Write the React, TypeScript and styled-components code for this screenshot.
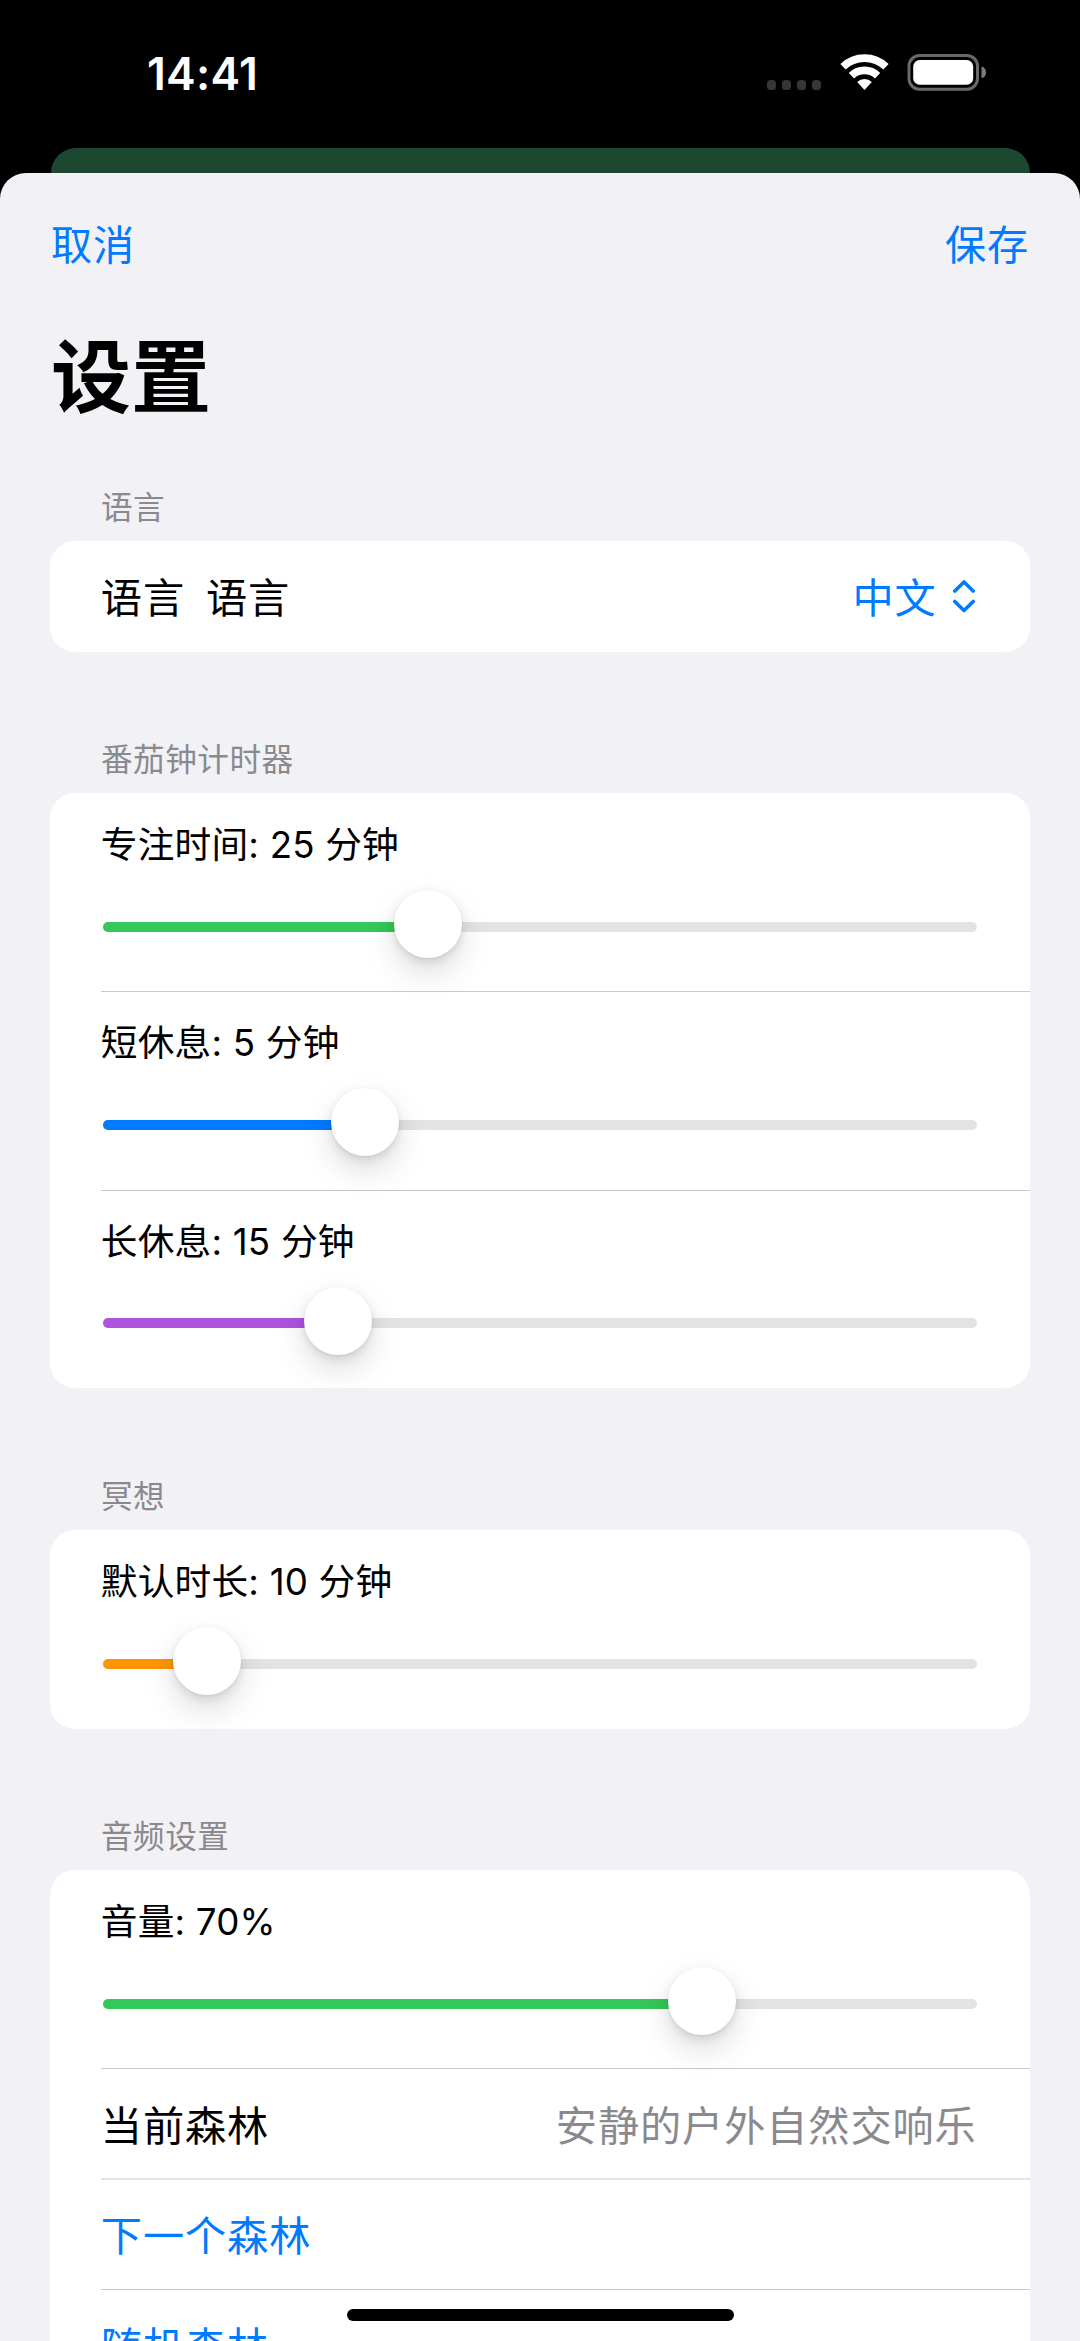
import React from "react";
import styled, { createGlobalStyle, css } from "styled-components";

const GlobalStyle = createGlobalStyle`
  * { box-sizing: border-box; }
  html, body { margin: 0; padding: 0; background: #000; }
  body {
    width: 1080px;
    height: 2341px;
    overflow: hidden;
    font-family: Inter, "Noto Sans CJK SC", sans-serif;
    color: #000;
  }
`;

const Screen = styled.div`
  position: relative;
  display: flex;
  flex-direction: column;
  width: 1080px;
  height: 2341px;
  overflow: hidden;
  background: #000;
`;

const StatusBar = styled.header`
  flex: none;
  display: flex;
  justify-content: space-between;
  height: 148px;
  padding: 54px 94px 0 147px;
`;

const Clock = styled.time`
  font-size: 44.5px;
  line-height: 40px;
  font-weight: 600;
  letter-spacing: 0.3px;
  color: #fff;
`;

const StatusIcons = styled.div`
  display: flex;
  gap: 18px;
  height: 37px;
`;

const SignalDots = styled.div`
  display: flex;
  align-items: flex-end;
  gap: 5.8px;
  padding: 0 1px 1px 0;
`;

const Dot = styled.i`
  width: 9.2px;
  height: 9.6px;
  border-radius: 3.5px;
  background: #363636;
`;

const BackCard = styled.div`
  flex: none;
  height: 25px;
  margin: 0 50.5px;
  border-radius: 25px 25px 0 0;
  background: #1c4831;
`;

const Sheet = styled.main`
  flex: 1;
  min-height: 0;
  overflow: hidden;
  border-radius: 26px 26px 0 0;
  background: #f2f1f6;
`;

const NavBar = styled.nav`
  display: flex;
  justify-content: space-between;
  height: 102px;
  padding: 42px 51px 0 51px;
`;

const NavButton = styled.button`
  padding: 0;
  border: 0;
  background: none;
  font: inherit;
  font-size: 41.2px;
  line-height: 60px;
  letter-spacing: 0.8px;
  color: #007aff;
`;

const Title = styled.h1`
  margin: 42px 0 0 51px;
  font-size: 80px;
  line-height: 120px;
  font-weight: 700;
`;

const SectionHeader = styled.h2<{ $height: number }>`
  display: flex;
  align-items: flex-end;
  height: ${(p) => p.$height}px;
  margin: 0;
  padding: 0 0 10px 101px;
  font-size: 31.6px;
  line-height: 46px;
  letter-spacing: 0.5px;
  font-weight: 400;
  color: #8a8a8e;
`;

const Card = styled.section`
  margin: 0 50.3px;
  border-radius: 25px;
  background: #fff;
`;

type Divider = "line" | "soft";

/* Hairline along the top edge; the soft one straddles two device pixels. */
const divider = css<{ $divider?: Divider }>`
  box-shadow: ${(p) =>
    p.$divider === "line"
      ? "inset 0 1px 0 #c8c8ca"
      : p.$divider === "soft"
        ? "inset 0 1px 0 #e4e4e6, 0 -1px 0 #e4e4e6"
        : "none"};
`;

const Row = styled.div<{ $divider?: Divider }>`
  display: flex;
  align-items: center;
  justify-content: space-between;
  height: 110.5px;
  margin-left: 50.5px;
  padding: 0 53px 2px 0;
  font-size: 41.2px;
  letter-spacing: 0.9px;
  ${divider}
`;

const RowLabel = styled.span<{ $link?: boolean }>`
  color: ${(p) => (p.$link ? "#007aff" : "#000")};
  white-space: pre;
  word-spacing: -2px;
`;

const RowValue = styled.span`
  color: #8a8a8e;
`;

const Picker = styled.span`
  display: flex;
  align-items: center;
  gap: 15px;
  padding-right: 1px;
  color: #007aff;
`;

const SliderRow = styled.div<{ $divider?: Divider }>`
  height: 198.4px;
  margin-left: 50.5px;
  padding: 27px 53px 0 0;
  ${divider}
`;

const SliderLabel = styled.div`
  font-size: 36.7px;
  line-height: 50px;
  letter-spacing: 0.2px;
`;

const Track = styled.div`
  position: relative;
  height: 10px;
  margin: 51.6px 0 0 2px;
  border-radius: 5px;
  background: #e3e3e4;
`;

const Fill = styled.div<{ $color: string }>`
  height: 100%;
  border-radius: 5px;
  background: ${(p) => p.$color};
`;

const Thumb = styled.div`
  position: absolute;
  top: -31.8px;
  width: 68px;
  height: 68px;
  margin-left: -34px;
  border-radius: 50%;
  background: #fff;
  box-shadow: 0 1px 3px rgba(0, 0, 0, 0.06), 0 14px 32px rgba(0, 0, 0, 0.14), 0 4px 10px rgba(0, 0, 0, 0.09);
`;

const HomeIndicator = styled.div`
  position: absolute;
  left: 346.5px;
  bottom: 20px;
  width: 387px;
  height: 12.5px;
  border-radius: 7px;
  background: #000;
`;

const WifiIcon = () => (
  <svg width="49" height="37" viewBox="0 0 49 37">
    <g fill="none" stroke="#fff" strokeWidth="7.6">
      <path d="M3 12.8a31 31 0 0 1 43 0" />
      <path d="M11.4 21.7a18.9 18.9 0 0 1 26.2 0" />
    </g>
    <path d="M24.5 36l-7.3-8.1a10.4 10.4 0 0 1 14.6 0z" fill="#fff" />
  </svg>
);

const BatteryIcon = () => (
  <svg width="79" height="37" viewBox="0 0 79 37">
    <rect x="2" y="1.5" width="68.5" height="33.7" rx="10.5" fill="none" stroke="#696969" strokeWidth="3" />
    <rect x="6.2" y="6" width="60" height="24.7" rx="6.5" fill="#fff" />
    <path d="M74.5 12.5c3 .8 4.5 3 4.5 5.900s-1.500 5.100-4.500 5.900z" fill="#7b7b7b" />
  </svg>
);

const ChevronPair = styled.svg`
  margin-top: 2px;
`;

const UpDownIcon = () => (
  <ChevronPair width="24" height="34" viewBox="0 0 24 34" fill="none" stroke="currentColor" strokeWidth="3.6" strokeLinecap="round" strokeLinejoin="round">
    <path d="M2.8 12L12 3l9.2 9M2.8 22.5l9.2 9 9.200-9" />
  </ChevronPair>
);

type SliderProps = { label: string; value: number; color: string; divider?: Divider };

const Slider = ({ label, value, color, divider: kind }: SliderProps) => (
  <SliderRow $divider={kind}>
    <SliderLabel>{label}</SliderLabel>
    <Track>
      <Fill $color={color} style={{ width: `${value}%` }} />
      <Thumb style={{ left: `${value}%` }} />
    </Track>
  </SliderRow>
);

export default function App() {
  return (
    <Screen>
      <GlobalStyle />
      <StatusBar>
        <Clock>14:41</Clock>
        <StatusIcons>
          <SignalDots>
            <Dot />
            <Dot />
            <Dot />
            <Dot />
          </SignalDots>
          <WifiIcon />
          <BatteryIcon />
        </StatusIcons>
      </StatusBar>
      <BackCard />
      <Sheet>
        <NavBar>
          <NavButton>取消</NavButton>
          <NavButton>保存</NavButton>
        </NavBar>
        <Title>设置</Title>

        <SectionHeader $height={104}>语言</SectionHeader>
        <Card>
          <Row>
            <RowLabel>{"语言  语言"}</RowLabel>
            <Picker>
              中文
              <UpDownIcon />
            </Picker>
          </Row>
        </Card>

        <SectionHeader $height={141.5}>番茄钟计时器</SectionHeader>
        <Card>
          <Slider label="专注时间: 25 分钟" value={37.2} color="#34c759" />
          <Slider label="短休息: 5 分钟" value={30.05} color="#007aff" divider="line" />
          <Slider label="长休息: 15 分钟" value={26.9} color="#af52de" divider="line" />
        </Card>

        <SectionHeader $height={142.2}>冥想</SectionHeader>
        <Card>
          <Slider label="默认时长: 10 分钟" value={11.9} color="#ff9500" />
        </Card>

        <SectionHeader $height={141.2}>音频设置</SectionHeader>
        <Card>
          <Slider label="音量: 70%" value={68.55} color="#34c759" />
          <Row $divider="line">
            <RowLabel>当前森林</RowLabel>
            <RowValue>安静的户外自然交响乐</RowValue>
          </Row>
          <Row $divider="soft">
            <RowLabel $link>下一个森林</RowLabel>
          </Row>
          <Row $divider="line">
            <RowLabel $link>随机森林</RowLabel>
          </Row>
        </Card>
      </Sheet>
      <HomeIndicator />
    </Screen>
  );
}
